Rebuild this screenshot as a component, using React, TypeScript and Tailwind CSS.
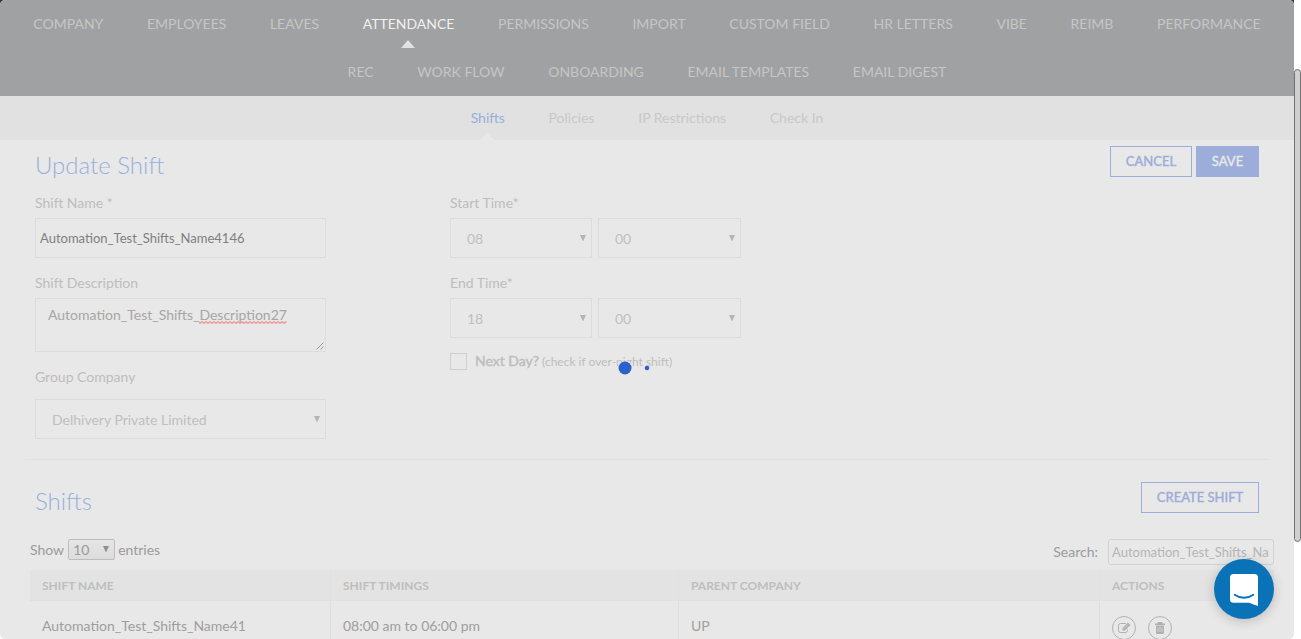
import React from "react";

const navTop = ["COMPANY", "EMPLOYEES", "LEAVES", "ATTENDANCE", "PERMISSIONS", "IMPORT", "CUSTOM FIELD", "HR LETTERS", "VIBE", "REIMB", "PERFORMANCE"];
const navBottom = ["REC", "WORK FLOW", "ONBOARDING", "EMAIL TEMPLATES", "EMAIL DIGEST"];
const tabs = ["Shifts", "Policies", "IP Restrictions", "Check In"];

function NavRow({ items }: { items: string[] }) {
  return (
    <ul className="flex h-12 items-center justify-center gap-[43.600px]">
      {items.map((item) => (
        <li key={item} className={item === "ATTENDANCE" ? "relative text-[#f0f0f0]" : "text-[#c6c6c6]"}>
          {item}
          {item === "ATTENDANCE" && (
            <svg className="absolute left-1/2 top-[26px] -ml-[7.500px]" width="14" height="8" viewBox="0 0 14 8">
              <path d="M7 0l7 8H0z" fill="#e2e2e2" />
            </svg>
          )}
        </li>
      ))}
    </ul>
  );
}

function Caret({ className }: { className: string }) {
  return (
    <svg className={className} width="6" height="6" viewBox="0 0 6 6">
      <path d="M0 0h6L3.3 6h-.6z" fill="currentColor" />
    </svg>
  );
}

function SelectBox({ value, className }: { value: string; className: string }) {
  return (
    <div className={`flex h-10 items-center justify-between border border-[#dcdcdc] pl-4 pr-[5px] pt-[2px] text-[#bfbfbf] ${className}`}>
      <span>{value}</span>
      <Caret className="mb-[3px] text-[#b5b5b5]" />
    </div>
  );
}

function EditIcon() {
  return (
    <svg width="13" height="12" viewBox="0 0 13 12" fill="none" stroke="currentColor">
      <path d="M8 1.5H2.5a2 2 0 0 0-2 2v5a2 2 0 0 0 2 2h5a2 2 0 0 0 2-2V7.5" />
      <path d="M4.500 6L10 .5 12.500 3 7 8.500H4.500z" fill="currentColor" stroke="none" />
      <path d="M5.800 6.800L10 2.600" stroke="#e8e8e8" strokeWidth=".5" />
    </svg>
  );
}

function ActionButton({ children }: { children: React.ReactNode }) {
  return (
    <span className="flex size-6 items-center justify-center rounded-full border border-[#b2b2b2] text-[#b0b0b0]">
      {children}
    </span>
  );
}

const fauxBold = "[-webkit-text-stroke:0.4px_currentColor]";

export default function App() {
  return (
    <div className="relative flex h-[639px] w-[1301px] overflow-hidden bg-white font-[Lato,sans-serif] text-[14px] leading-5">
      <div className="w-[1294px] shrink-0 bg-[linear-gradient(#303234_50%,#fff_50%)]">
        <div className="h-[639px] overflow-hidden rounded-[5px] bg-[#e8e8e8]">
          <nav className="h-24 bg-[#a0a1a2]">
            <NavRow items={navTop} />
            <NavRow items={navBottom} />
          </nav>
          <ul className="flex h-11 items-center justify-center gap-[43.600px] bg-[#e1e1e1] text-[#c8c8c8]">
            {tabs.map((tab) => (
              <li key={tab} className={tab === "Shifts" ? "relative text-[#96afd9]" : ""}>
                {tab}
                {tab === "Shifts" && (
                  <svg className="absolute left-1/2 top-[24px] -ml-[7.500px]" width="14" height="8" viewBox="0 0 14 8">
                    <path d="M7 0l7 8H0z" fill="#e8e8e8" />
                  </svg>
                )}
              </li>
            ))}
          </ul>

          <section className="mx-[25px] h-[320px] border-b border-[#e0e0e0] px-[10px] pt-[6px]">
            <div className="flex h-[47px] items-start justify-between">
              <h1 className="mt-[3px] text-[24px] font-light leading-8 text-[#98afdb]">Update Shift</h1>
              <div className={`flex gap-1 ${fauxBold}`}>
                <button className="h-[31px] w-[82px] border border-[#9badd8] pb-[2px] text-[13px] text-[#9badd8]">CANCEL</button>
                <button className="h-[31px] w-[63px] bg-[#9badd8] pb-[2px] text-[13px] text-[#e8e8e8]">SAVE</button>
              </div>
            </div>
            <div className="flex text-[#bdbdbd]">
              <div className="w-[415px]">
                <label className="block h-[25px]">Shift Name *</label>
                <input
                  className="block h-10 w-[291px] border border-[#dcdcdc] px-1 text-[13px] text-[#7f7f7f]"
                  defaultValue="Automation_Test_Shifts_Name4146"
                />
                <label className="mt-[15px] block h-[25px]">Shift Description</label>
                <div className="relative h-[54px] w-[291px] border border-[#dcdcdc] px-3 py-[6px] text-[#a6a6a6]">
                  Automation_Test_Shifts_
                  <span className="relative">
                    Description27
                    <svg className="absolute -bottom-px left-0 w-full" height="3" fill="none">
                      <defs>
                        <pattern id="squiggle" width="4" height="3" patternUnits="userSpaceOnUse">
                          <path d="M-1 .5L1 2.500 3 .5 5 2.500" stroke="#ee8f8f" strokeWidth="1.100" />
                        </pattern>
                      </defs>
                      <rect width="100%" height="3" fill="url(#squiggle)" />
                    </svg>
                  </span>
                  <svg className="absolute bottom-[1px] right-[1px]" width="8" height="8" viewBox="0 0 8 8" stroke="#999" fill="none">
                    <path d="M.5 7.500l7-7M4.500 7.500l3-3" />
                  </svg>
                </div>
                <label className="mt-[15px] block h-8">Group Company</label>
                <SelectBox value="Delhivery Private Limited" className="w-[291px]" />
              </div>
              <div>
                <label className="block h-[25px]">Start Time*</label>
                <div className="flex gap-[6px]">
                  <SelectBox value="08" className="w-[142px]" />
                  <SelectBox value="00" className="w-[143px]" />
                </div>
                <label className="mt-[15px] block h-[25px]">End Time*</label>
                <div className="flex gap-[6px]">
                  <SelectBox value="18" className="w-[142px]" />
                  <SelectBox value="00" className="w-[143px]" />
                </div>
                <div className="mt-[13px] flex items-start">
                  <span className="mt-[2px] size-[17px] border border-[#cfcfcf]" />
                  <span className={`ml-2 ${fauxBold}`}>Next Day?</span>
                  <span className="ml-[3px] mt-px text-[12px]">(check if over-night shift)</span>
                </div>
              </div>
            </div>
          </section>

          <section className="px-[30px] pt-[22px]">
            <div className="flex h-[57px] items-start justify-between pl-[5px] pr-[5px]">
              <h2 className="mt-[3px] text-[24px] font-light leading-8 text-[#98afdb]">Shifts</h2>
              <button className={`h-[31px] w-[118px] border border-[#9badd8] pb-[2px] text-[13px] text-[#9badd8] ${fauxBold}`}>CREATE SHIFT</button>
            </div>
            <div className="-mr-[10px] flex h-[31px] items-start justify-between text-[#9b9b9b]">
              <div className="flex items-center">
                Show
                <span className="ml-1 mr-[3px] flex h-[21px] w-[47px] items-center justify-between rounded-[2px] border border-[#bdbdbd] bg-gradient-to-b from-[#e6e6e6] to-[#dcdcdc] pl-1 pr-[5px]">
                  10
                  <Caret className="mb-[2px] text-[#929292]" />
                </span>
                entries
              </div>
              <label className="flex items-center">
                Search:
                <input
                  className="ml-[10px] h-[26px] w-[166px] rounded-[3px] border border-[#d2d2d2] pl-[3px] pr-1 text-[13px] text-[#b5b5b5]"
                  defaultValue="Automation_Test_Shifts_Name41"
                />
              </label>
            </div>
            <table className="w-[1244px] table-fixed border-separate border-spacing-0 text-left">
              <colgroup>
                <col className="w-[301px]" />
                <col className="w-[348px]" />
                <col className="w-[421px]" />
                <col className="w-[174px]" />
              </colgroup>
              <thead>
                <tr className="h-[31px] bg-[#e3e3e3] text-[12px] text-[#bebebe]">
                  {["SHIFT NAME", "SHIFT TIMINGS", "PARENT COMPANY", "ACTIONS"].map((heading) => (
                    <th key={heading} className="border-b border-r border-[#e0e0e0] pb-0 pl-3 pt-[2px] font-bold last:border-r-0">{heading}</th>
                  ))}
                </tr>
              </thead>
              <tbody>
                <tr className="h-[50px] text-[#9e9e9e]">
                  <td className="border-r border-[#dfdfdf] pl-3">Automation_Test_Shifts_Name41</td>
                  <td className="border-r border-[#dfdfdf] pl-3">08:00 am to 06:00 pm</td>
                  <td className="border-r border-[#dfdfdf] pl-3">UP</td>
                  <td className="pl-3 pt-[3px]">
                    <div className="flex gap-3">
                      <ActionButton><EditIcon /></ActionButton>
                      <ActionButton>
                        <svg width="10" height="12" viewBox="0 0 10 12" fill="currentColor">
                          <path d="M3 0h4l.7 1.500H10V3H0V1.500h2.300zM1 3.500h8V11a1 1 0 0 1-1 1H2a1 1 0 0 1-1-1z" />
                          <path d="M3 5v5M5 5v5M7 5v5" stroke="#e8e8e8" strokeWidth=".6" />
                        </svg>
                      </ActionButton>
                    </div>
                  </td>
                </tr>
              </tbody>
            </table>
          </section>
        </div>
      </div>

      <div className="w-[7px] pt-[69px]">
        <div className="h-[473px] rounded-[4px] border border-[#717171] bg-[#d0d0d0]" />
      </div>

      <svg className="absolute left-[618px] top-[361px]" width="34" height="14" viewBox="0 0 34 14" fill="#2c61cc">
        <circle cx="7" cy="7" r="6.500" />
        <circle cx="29" cy="7" r="2.300" />
      </svg>

      <button className="absolute left-[1214px] top-[559px] flex size-[60px] items-center justify-center rounded-full bg-[#0a73b8] shadow-[0_2px_12px_rgba(0,0,0,0.2)]">
        <svg className="mt-px" width="28" height="32" viewBox="0 0 28 32">
          <path d="M3.500 0h21A3.500 3.500 0 0 1 28 3.500V32s-5-1.700-9-3.200H3.500A3.500 3.500 0 0 1 0 25.300V3.500A3.500 3.500 0 0 1 3.500 0z" fill="#fff" />
          <path d="M4.700 20.800c5.500 4 13.100 4 18.600 0" fill="none" stroke="#0a73b8" strokeWidth="1.900" strokeLinecap="round" />
        </svg>
      </button>
    </div>
  );
}
